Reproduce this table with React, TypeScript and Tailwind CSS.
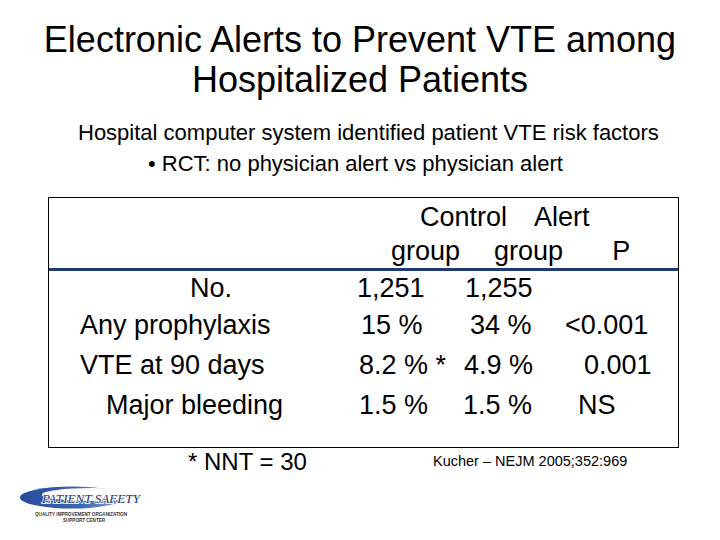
const rows = [
  { label: 'No.', lp: 'pl-[141px]', c: '1,251', cp: 'pl-0', a: '1,255', ap: 'pl-[2px]', p: '', pp: 'pl-0', h: 'h-[34px]' },
  { label: 'Any prophylaxis', lp: 'pl-[31px]', c: '15 %', cp: 'pl-[4px]', a: '34 %', ap: 'pl-[7px]', p: '<0.001', pp: 'pl-[2px]', h: 'h-[40px]' },
  { label: 'VTE at 90 days', lp: 'pl-[31px]', c: '8.2 % *', cp: 'pl-[2px]', a: '4.9 %', ap: 'pl-[1px]', p: '0.001', pp: 'pl-[21px]', h: 'h-[40px]' },
  { label: 'Major bleeding', lp: 'pl-[57px]', c: '1.5 %', cp: 'pl-[2px]', a: '1.5 %', ap: 'pl-0', p: 'NS', pp: 'pl-[15px]', h: 'h-[40px]' },
];

const PatientSafetyLogo = () => (
  <svg width="135" height="40" viewBox="0 0 135 40">
    <defs>
      <linearGradient id="swoosh" x1="0" y1="0" x2="1" y2="0">
        <stop offset="0" stopColor="#24479a" />
        <stop offset="0.5" stopColor="#3a67b3" />
        <stop offset="1" stopColor="#a9bfe2" />
      </linearGradient>
      <mask id="crescent">
        <ellipse cx="60" cy="12.5" rx="52" ry="11" fill="#fff" />
        <ellipse cx="80" cy="9.5" rx="50" ry="6.5" fill="#000" />
      </mask>
    </defs>
    <rect x="0" y="0" width="135" height="25" fill="url(#swoosh)" mask="url(#crescent)" />
    <text
      x="30"
      y="18"
      fontFamily="'Liberation Serif', serif"
      fontStyle="italic"
      fontSize="13"
      fill="#1d2f6a"
      stroke="#ffffff"
      strokeWidth="1.6"
      paintOrder="stroke"
      textLength="98"
      lengthAdjust="spacingAndGlyphs"
    >
      PATIENT SAFETY
    </text>
    <text x="23" y="31" fontFamily="'Liberation Sans', sans-serif" fontSize="5" fontWeight="bold" fill="#333" textLength="92" lengthAdjust="spacingAndGlyphs">
      QUALITY IMPROVEMENT ORGANIZATION
    </text>
    <text x="51" y="36.5" fontFamily="'Liberation Sans', sans-serif" fontSize="5" fontWeight="bold" fill="#333" textLength="42" lengthAdjust="spacingAndGlyphs">
      SUPPORT CENTER
    </text>
  </svg>
);

export default function App() {
  return (
    <div className="w-[720px] h-[540px] bg-white text-black overflow-hidden font-['Liberation_Sans',Arial,sans-serif]">
      <div className="pt-[20px] text-center text-[36px] leading-[40px]">
        <div>Electronic Alerts to Prevent VTE among</div>
        <div>Hospitalized Patients</div>
      </div>

      <div className="mt-[17px] text-[22px] leading-[31px]">
        <div className="pl-[78px]">Hospital computer system identified patient VTE risk factors</div>
        <div className="pl-[148px]">• RCT: no physician alert vs physician alert</div>
      </div>

      <div className="mt-[18px] ml-[48px] w-[631px] border border-black pt-[2px] pb-[22px] text-[27px]">
        <div className="leading-[34px] whitespace-nowrap">
          <div className="pl-[371px]">
            Control<span className="ml-[27px]">Alert</span>
          </div>
          <div className="pl-[342px]">
            group<span className="ml-[34px]">group</span>
            <span className="ml-[49px]">P</span>
          </div>
        </div>
        <div className="h-[3px] bg-[#1f3a75]" />
        {rows.map((r) => (
          <div key={r.label} className={`flex items-center whitespace-nowrap ${r.h}`}>
            <div className={`w-[308px] ${r.lp}`}>{r.label}</div>
            <div className={`w-[106px] ${r.cp}`}>{r.c}</div>
            <div className={`w-[100px] ${r.ap}`}>{r.a}</div>
            <div className={`flex-1 ${r.pp}`}>{r.p}</div>
          </div>
        ))}
      </div>

      <div className="flex items-center h-[28px] whitespace-nowrap">
        <div className="pl-[188px] w-[433px] text-[24px]">* NNT = 30</div>
        <div className="text-[14.5px]">Kucher – NEJM 2005;352:969</div>
      </div>

      <div className="mt-[9px] ml-[12px]">
        <PatientSafetyLogo />
      </div>
    </div>
  );
}
